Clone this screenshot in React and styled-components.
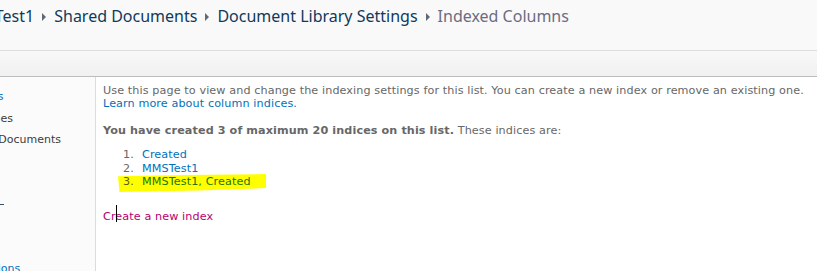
import React from "react";
import styled, { createGlobalStyle } from "styled-components";

const Global = createGlobalStyle`
  html, body { margin: 0; padding: 0; background: #ffffff; overflow: hidden; }
  body { font-family: "DejaVu Sans", Verdana, sans-serif; }
`;

const Page = styled.div`
  width: 817px;
  height: 271px;
  display: flex;
  flex-direction: column;
  overflow: hidden;
`;

const TitleArea = styled.header`
  height: 50px;
  flex: none;
  background: #f9f9f9;
  border-bottom: 1px solid #dcdcdc;
  overflow: hidden;
`;

const Crumbs = styled.nav`
  display: flex;
  align-items: center;
  gap: 8px;
  margin-left: -43px;
  padding-top: 4px;
  height: 24px;
  font-family: "Noto Sans", "Open Sans", sans-serif;
  font-size: 16px;
  white-space: nowrap;
`;

const Crumb = styled.span`
  color: ${(p) => (p.$current ? "#6b6c82" : "#0f3a5c")};
`;

const Arrow = styled.span`
  width: 0;
  height: 0;
  border-top: 4px solid transparent;
  border-bottom: 4px solid transparent;
  border-left: 4px solid #5e6a76;
  margin-top: 1px;
`;

const RibbonBand = styled.div`
  height: 25px;
  flex: none;
  background: linear-gradient(#f8f8f8, #f1f1f1);
  border-bottom: 1px solid #bdbdbd;
`;

const Body = styled.div`
  flex: 1;
  display: flex;
  min-height: 0;
`;

const QuickLaunch = styled.aside`
  width: 95px;
  flex: none;
  background: #fbfbfb;
  border-right: 1px solid #dcdcdc;
  overflow: hidden;
`;

const NavList = styled.ul`
  list-style: none;
  margin: 0 0 0 -44px;
  padding: 13px 0 0;
  font-size: 11px;
  white-space: nowrap;
`;

const NavItem = styled.li`
  height: 21.5px;
  line-height: 13px;
  color: ${(p) => (p.$heading ? "#0072bc" : "#3b3b3b")};
`;

const NavRule = styled.li`
  height: 21.5px;
  position: relative;
  &::after {
    content: "";
    position: absolute;
    left: 0;
    top: 6px;
    width: 48px;
    height: 1px;
    background: #3b4f65;
  }
`;

const Content = styled.main`
  position: relative;
  flex: 1;
  padding: 7px 0 0 7px;
  font-size: 11.2px;
  letter-spacing: 0.1px;
  line-height: 13px;
  color: #676767;
`;

const Para = styled.p`
  margin: 0;
`;

const Link = styled.a`
  color: ${(p) => p.$color || "#0072bc"};
  text-decoration: none;
`;

const Summary = styled.p`
  margin: 14px 0 0;
  b { font-weight: bold; }
`;

const IndexList = styled.ol`
  list-style: none;
  margin: 11px 0 0;
  padding: 0 0 0 20px;
`;

const IndexItem = styled.li`
  position: relative;
  isolation: isolate;
  display: flex;
  height: 13.5px;
  color: ${(p) => (p.$marked ? "#5e5e00" : "#676767")};
  ${(p) =>
    p.$marked &&
    `
    &::before {
      content: "";
      position: absolute;
      z-index: -1;
      left: -5px;
      top: -1px;
      width: 148px;
      height: 18px;
      background: #ffff00;
      clip-path: polygon(0 12%, 45% 6%, 100% 0, 100% 78%, 55% 92%, 1% 100%);
    }
  `}
`;

const Num = styled.span`
  width: 19px;
  flex: none;
`;

const CreateLine = styled.p`
  margin: 21px 0 0;
`;

const Caret = styled.span`
  position: absolute;
  left: 20px;
  top: 128px;
  width: 1px;
  height: 17px;
  background: #000;
`;

export default function App() {
  return (
    <Page>
      <Global />
      <TitleArea>
        <Crumbs>
          <Crumb>MMSTest1</Crumb>
          <Arrow />
          <Crumb>Shared Documents</Crumb>
          <Arrow />
          <Crumb>Document Library Settings</Crumb>
          <Arrow />
          <Crumb $current>Indexed Columns</Crumb>
        </Crumbs>
      </TitleArea>
      <RibbonBand />
      <Body>
        <QuickLaunch>
          <NavList>
            <NavItem $heading>Libraries</NavItem>
            <NavItem>Site Pages</NavItem>
            <NavItem>Shared Documents</NavItem>
            <NavItem $heading>Lists</NavItem>
            <NavItem>Tasks</NavItem>
            <NavRule />
            <NavItem>Team</NavItem>
            <NavItem>Tasks</NavItem>
            <NavItem $heading>Discussions</NavItem>
          </NavList>
        </QuickLaunch>
        <Content>
          <Para>
            Use this page to view and change the indexing settings for this list. You can create a new index or remove an existing one.
            <br />
            <Link href="#">Learn more about column indices.</Link>
          </Para>
          <Summary>
            <b>You have created 3 of maximum 20 indices on this list.</b> These indices are:
          </Summary>
          <IndexList>
            <IndexItem>
              <Num>1.</Num>
              <Link href="#">Created</Link>
            </IndexItem>
            <IndexItem>
              <Num>2.</Num>
              <Link href="#">MMSTest1</Link>
            </IndexItem>
            <IndexItem $marked>
              <Num>3.</Num>
              <Link href="#" $color="#1d7600">MMSTest1, Created</Link>
            </IndexItem>
          </IndexList>
          <CreateLine>
            <Link href="#" $color="#b8006f">Create a new index</Link>
          </CreateLine>
          <Caret />
        </Content>
      </Body>
    </Page>
  );
}
